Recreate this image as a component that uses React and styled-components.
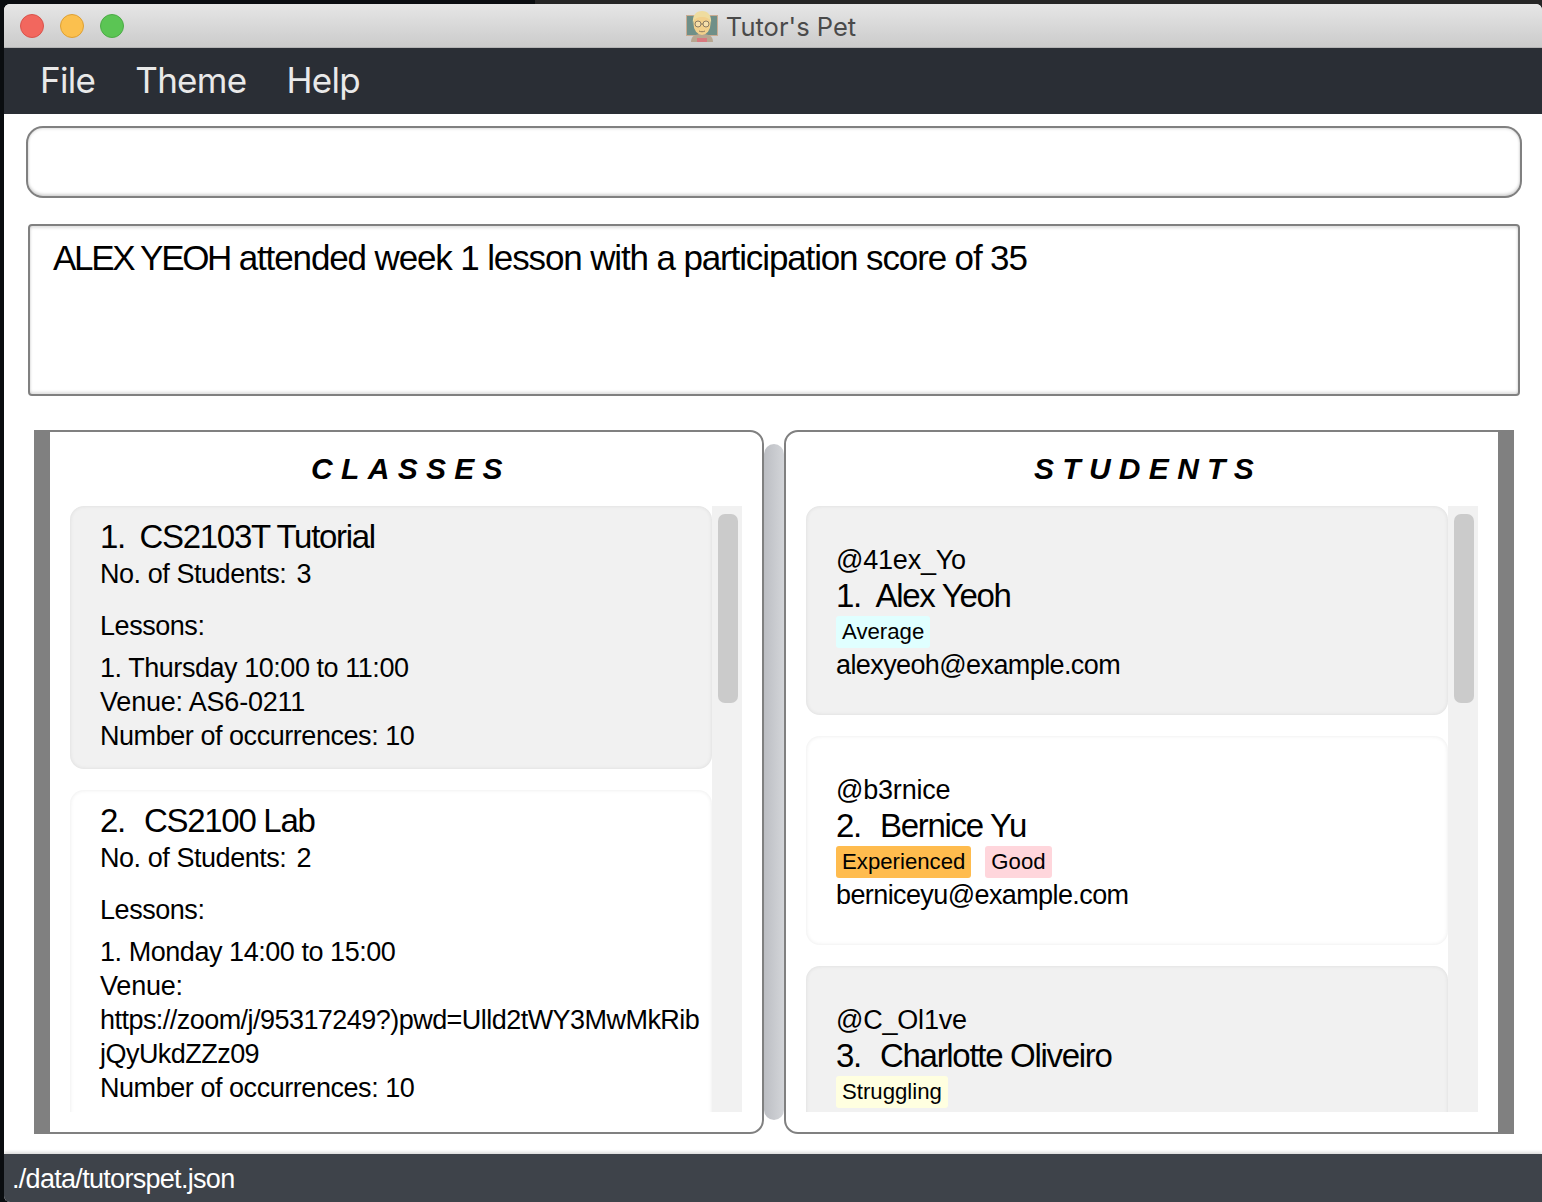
import React from "react";
import styled, { createGlobalStyle } from "styled-components";

const Global = createGlobalStyle`
html, body {
  margin: 0;
  padding: 0;
  background: linear-gradient(90deg, #0a0d10 535px, #262626 535px);
}
body {
  font-family: "Liberation Sans", Arial, sans-serif;
  color: #000;
}
* { box-sizing: border-box; }
`;

const Window = styled.div`
width: 1538px;
height: 1198px;
margin: 4px 0 0 4px;
background: #fff;
border-radius: 6px 6px 0 6px;
overflow: hidden;
display: flex;
flex-direction: column;
`;

const TitleBar = styled.div`
position: relative;
height: 44px;
flex: none;
background: linear-gradient(#e6e6e6, #cbcbcb);
border-bottom: 1px solid #b4b4b4;
display: flex;
align-items: center;
justify-content: center;
`;

const Lights = styled.div`
position: absolute;
left: 16px;
top: 10px;
display: flex;
gap: 16px;
`;

const Light = styled.span`
width: 24px;
height: 24px;
border-radius: 50%;
background: ${(p) => p.$fill};
border: 1px solid ${(p) => p.$edge};
`;

const WindowTitle = styled.div`
display: flex;
align-items: center;
gap: 8px;
margin-left: -4px;
padding-top: 2px;
font-family: "Inter", "Liberation Sans", sans-serif;
font-size: 25.5px;
color: #4a4a4a;
`;

const MenuBar = styled.div`
height: 66px;
flex: none;
background: #2a2e35;
display: flex;
align-items: center;
padding: 0 0 2px 36px;
gap: 40px;
`;

const MenuItem = styled.span`
font-family: "Inter", "Liberation Sans", sans-serif;
font-size: 35px;
letter-spacing: -0.7px;
color: #e9e9e9;
`;

const CommandBox = styled.div`
height: 72px;
margin: 12px 20px 0 22px;
flex: none;
background: #fff;
border: 2px solid #808080;
border-radius: 17px;
box-shadow: inset 0 -2px 3px rgba(0, 0, 0, 0.16), inset 0 1px 3px rgba(0, 0, 0, 0.12);
`;

const ResultBox = styled.div`
height: 172px;
margin: 26px 22px 0 24px;
flex: none;
border: 2px solid #808080;
border-radius: 4px;
padding: 11px 23px;
font-size: 35px;
line-height: 41px;
letter-spacing: -1.13px;
box-shadow: inset 0 2px 3px rgba(0, 0, 0, 0.12), inset 0 -2px 3px rgba(0, 0, 0, 0.12);
`;

const ResultName = styled.span`
letter-spacing: -2.3px;
`;

const Split = styled.div`
height: 704px;
margin: 34px 28px 0 30px;
flex: none;
display: flex;
`;

const Panel = styled.section`
width: 730px;
flex: none;
display: flex;
flex-direction: column;
background: #fff;
border-top: 2px solid #808080;
border-bottom: 2px solid #808080;
border-left: ${(p) => (p.$side === "left" ? "16px solid #808080" : "2px solid #808080")};
border-right: ${(p) => (p.$side === "right" ? "16px solid #808080" : "2px solid #808080")};
border-radius: ${(p) => (p.$side === "left" ? "0 14px 14px 0" : "14px 0 0 14px")};
padding: 0 20px 20px;
`;

const PanelTitle = styled.h2`
margin: 0;
height: 74px;
flex: none;
display: flex;
align-items: center;
justify-content: center;
padding-left: ${(p) => p.$shift}px;
font-size: 30px;
font-weight: 700;
font-style: italic;
letter-spacing: 8.3px;
`;

const ListArea = styled.div`
flex: 1;
min-height: 0;
display: flex;
overflow: hidden;
`;

const Cards = styled.div`
flex: 1;
min-width: 0;
display: flex;
flex-direction: column;
gap: 21px;
overflow: hidden;
`;

const Track = styled.div`
width: 30px;
flex: none;
background: #f1f1f1;
padding: 8px 4px 0 6px;
`;

const Thumb = styled.div`
height: 189px;
background: #cbcbcb;
border-radius: 7px;
`;

const Divider = styled.div`
width: 20px;
flex: none;
margin: 14px 0;
background: linear-gradient(90deg, #bcbec3, #d3d5d9);
border-radius: 10px;
`;

const Card = styled.article`
flex: none;
height: ${(p) => p.$height}px;
background: ${(p) => (p.$alt ? "#f1f1f1" : "#fff")};
border-radius: 14px;
box-shadow: inset 0 0 4px rgba(0, 0, 0, 0.09);
padding: ${(p) => p.$pad};
font-size: 27px;
line-height: 34px;
letter-spacing: -0.45px;
`;

const CardTitle = styled.div`
font-size: 33px;
line-height: 42px;
letter-spacing: -1.3px;
margin: ${(p) => (p.$student ? "-2px 0 -2px" : "0 0 -1px")};
white-space: pre;
`;

const TitleIndex = styled.span`
display: inline-block;
width: ${(p) => (p.$narrow ? 39.5 : 44)}px;
`;

const Count = styled.span`
margin-left: 10px;
`;

const Spaced = styled.div`
margin-top: ${(p) => p.$gap}px;
`;

const Loose = styled.div`
letter-spacing: -0.2px;
`;

const Email = styled.div`
letter-spacing: -0.6px;
`;

const Url = styled.div`
word-break: break-all;
letter-spacing: -0.54px;
`;

const Tags = styled.div`
display: flex;
gap: 14px;
height: 33px;
margin-top: -1px;
align-items: center;
`;

const Tag = styled.span`
height: 32px;
line-height: 32px;
padding: 0 6px;
font-size: 22.2px;
letter-spacing: 0;
border-radius: 3px;
background: ${(p) => p.$color};
`;

const StatusBar = styled.div`
height: 48px;
margin-top: 20px;
flex: none;
background: #3e434a;
box-shadow: 0 -2px 3px rgba(0, 0, 0, 0.14);
padding-left: 8px;
font-size: 27px;
line-height: 50px;
letter-spacing: -0.7px;
color: #fff;
`;

const classes = [
  {
    index: "1.",
    title: "CS2103T Tutorial",
    students: 3,
    time: "1. Thursday 10:00 to 11:00",
    place: "Venue: AS6-0211",
    alt: true,
    height: 263,
  },
  {
    index: "2.",
    title: "CS2100 Lab",
    students: 2,
    time: "1. Monday 14:00 to 15:00",
    place: "Venue:",
    url: "https://zoom/j/95317249?)pwd=Ulld2tWY3MwMkRibjQyUkdZZz09",
    height: 340,
  },
];

const students = [
  {
    handle: "@41ex_Yo",
    index: "1.",
    name: "Alex Yeoh",
    tags: [["Average", "#e0ffff"]],
    email: "alexyeoh@example.com",
    alt: true,
  },
  {
    handle: "@b3rnice",
    index: "2.",
    name: "Bernice Yu",
    tags: [["Experienced", "#ffbc4e"], ["Good", "#ffd6dc"]],
    email: "berniceyu@example.com",
  },
  {
    handle: "@C_Ol1ve",
    index: "3.",
    name: "Charlotte Oliveiro",
    tags: [["Struggling", "#ffffe0"]],
    alt: true,
  },
];

function AppIcon() {
  return (
    <svg width="32" height="31" viewBox="0 0 32 31">
      <rect x="0.5" y="4.500" width="31" height="20" fill="#6f8f88" stroke="#c9ab92" />
      <path d="M5 31c0-6 4-8 11-8s11 2 11 8z" fill="#b7a690" />
      <rect x="11" y="27" width="10" height="4" fill="#d8797f" />
      <ellipse cx="16" cy="13" rx="8.500" ry="11" fill="#f2d08c" />
      <path d="M7 13C6 4 10 0 16 0s10 4 9 13c-1-5-3-7-9-7s-8 2-9 7z" fill="#efdc9f" />
      <circle cx="12" cy="13" r="3" fill="#f6e0ac" stroke="#80705a" strokeWidth="0.9" />
      <circle cx="20" cy="13" r="3" fill="#f6e0ac" stroke="#80705a" strokeWidth="0.9" />
      <path d="M15 13h2M13 20c2 1 4 1 6 0" fill="none" stroke="#80705a" strokeWidth="0.9" />
    </svg>
  );
}

function ClassCard({ item }) {
  return (
    <Card $alt={item.alt} $height={item.height} $pad="10px 10px 0 30px">
      <CardTitle>
        <TitleIndex $narrow={item.index === "1."}>{item.index}</TitleIndex>
        {item.title}
      </CardTitle>
      <div>No. of Students:<Count>{item.students}</Count></div>
      <Spaced $gap={18}>Lessons:</Spaced>
      <Spaced $gap={8}>{item.time}</Spaced>
      <Loose>{item.place}</Loose>
      {item.url && <Url>{item.url}</Url>}
      <div>Number of occurrences: 10</div>
    </Card>
  );
}

function StudentCard({ item }) {
  return (
    <Card $alt={item.alt} $height={209} $pad="37px 10px 0 30px">
      <Loose>{item.handle}</Loose>
      <CardTitle $student>
        <TitleIndex $narrow={item.index === "1."}>{item.index}</TitleIndex>
        {item.name}
      </CardTitle>
      <Tags>
        {item.tags.map(([label, color]) => (
          <Tag key={label} $color={color}>{label}</Tag>
        ))}
      </Tags>
      {item.email && <Email>{item.email}</Email>}
    </Card>
  );
}

export default function App() {
  return (
    <>
      <Global />
      <Window>
        <TitleBar>
          <Lights>
            <Light $fill="#f2675e" $edge="#d9534c" />
            <Light $fill="#fbc04e" $edge="#dea034" />
            <Light $fill="#5bc554" $edge="#4cab46" />
          </Lights>
          <WindowTitle>
            <AppIcon />
            Tutor's Pet
          </WindowTitle>
        </TitleBar>
        <MenuBar>
          <MenuItem>File</MenuItem>
          <MenuItem>Theme</MenuItem>
          <MenuItem>Help</MenuItem>
        </MenuBar>
        <CommandBox />
        <ResultBox>
          <ResultName>ALEX YEOH</ResultName> attended week 1 lesson with a participation score of 35
        </ResultBox>
        <Split>
          <Panel $side="left">
            <PanelTitle $shift={10}>CLASSES</PanelTitle>
            <ListArea>
              <Cards>
                {classes.map((c) => (
                  <ClassCard key={c.title} item={c} />
                ))}
              </Cards>
              <Track><Thumb /></Track>
            </ListArea>
          </Panel>
          <Divider />
          <Panel $side="right">
            <PanelTitle $shift={12}>STUDENTS</PanelTitle>
            <ListArea>
              <Cards>
                {students.map((s) => (
                  <StudentCard key={s.handle} item={s} />
                ))}
              </Cards>
              <Track><Thumb /></Track>
            </ListArea>
          </Panel>
        </Split>
        <StatusBar>./data/tutorspet.json</StatusBar>
      </Window>
    </>
  );
}
